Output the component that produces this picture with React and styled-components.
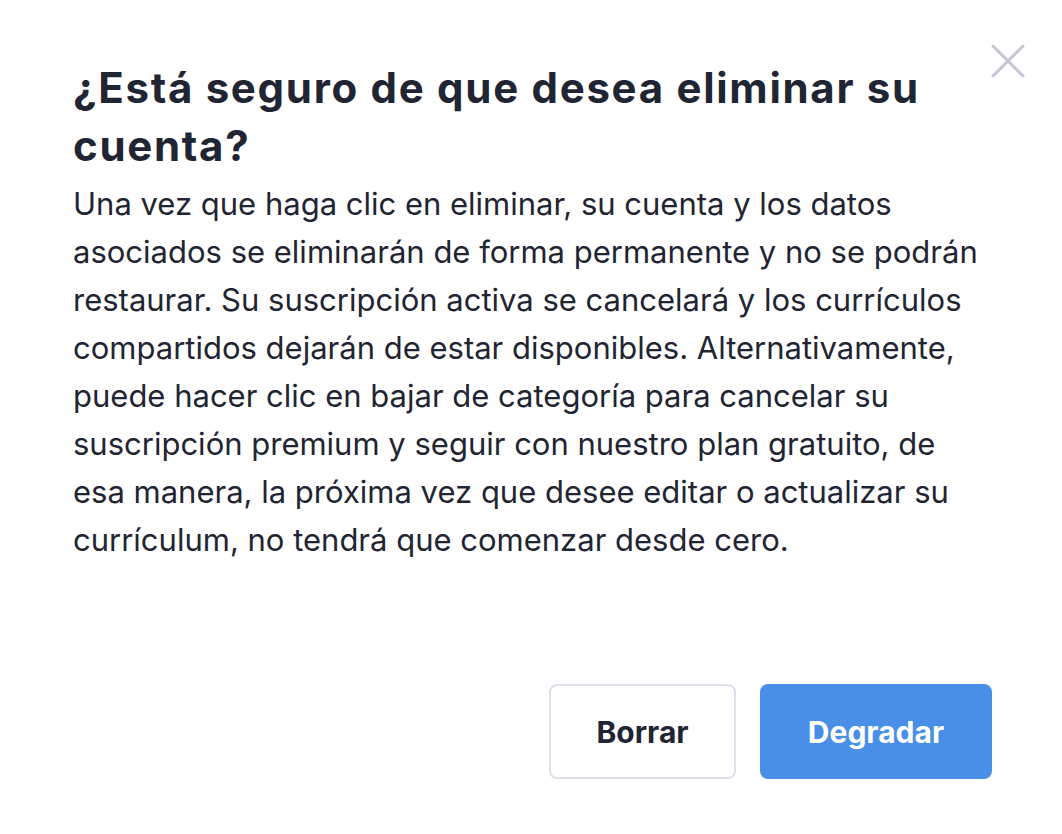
import React from "react";
import styled, { createGlobalStyle } from "styled-components";

const GlobalStyle = createGlobalStyle`
  html, body {
    margin: 0;
    padding: 0;
    background: #ffffff;
  }
  body {
    font-family: Inter, "Open Sans", sans-serif;
    color: #1f2532;
  }
`;

const Modal = styled.div`
  position: relative;
  width: 1062px;
  height: 834px;
  box-sizing: border-box;
  padding: 59px 70px 55px 73px;
  display: flex;
  flex-direction: column;
  background: #fff;
`;

const CloseButton = styled.button`
  position: absolute;
  top: 44px;
  right: 37px;
  width: 34px;
  height: 34px;
  padding: 0;
  border: none;
  background: transparent;
  cursor: pointer;
  svg {
    display: block;
  }
`;

const Title = styled.h1`
  margin: 0;
  font-size: 42px;
  line-height: 58px;
  font-weight: 700;
  letter-spacing: 1.7px;
  color: #1f2532;
`;

const Body = styled.p`
  margin: 5px 0 0;
  font-size: 31px;
  line-height: 48px;
  font-weight: 400;
  color: #1f2532;
`;

const Actions = styled.div`
  margin-top: auto;
  display: flex;
  justify-content: flex-end;
  gap: 24px;
`;

const Button = styled.button`
  height: 95px;
  box-sizing: border-box;
  border-radius: 8px;
  font-family: Inter, sans-serif;
  font-size: 30px;
  font-weight: 700;
  cursor: pointer;
  width: ${(p) => (p.primary ? "232px" : "187px")};
  border: ${(p) => (p.primary ? "none" : "2px solid #dde0ec")};
  background: ${(p) => (p.primary ? "#4a8fe7" : "#ffffff")};
  color: ${(p) => (p.primary ? "#ffffff" : "#1f2532")};
`;

const App = () => {
  return (
    <>
      <GlobalStyle />
      <Modal>
        <CloseButton aria-label="Cerrar">
          <svg width="34" height="34" viewBox="0 0 34 34">
            <path
              d="M2 2 L32 32 M32 2 L2 32"
              stroke="#c3c7d4"
              strokeWidth="3"
              strokeLinecap="round"
            />
          </svg>
        </CloseButton>
        <Title>¿Está seguro de que desea eliminar su cuenta?</Title>
        <Body>
          Una vez que haga clic en eliminar, su cuenta y los datos asociados se
          eliminarán de forma permanente y no se podrán restaurar. Su
          suscripción activa se cancelará y los currículos compartidos dejarán
          de estar disponibles. Alternativamente, puede hacer clic en bajar de
          categoría para cancelar su suscripción premium y seguir con nuestro
          plan gratuito, de esa manera, la próxima vez que desee editar o
          actualizar su currículum, no tendrá que comenzar desde cero.
        </Body>
        <Actions>
          <Button>Borrar</Button>
          <Button primary>Degradar</Button>
        </Actions>
      </Modal>
    </>
  );
};

export default App;
